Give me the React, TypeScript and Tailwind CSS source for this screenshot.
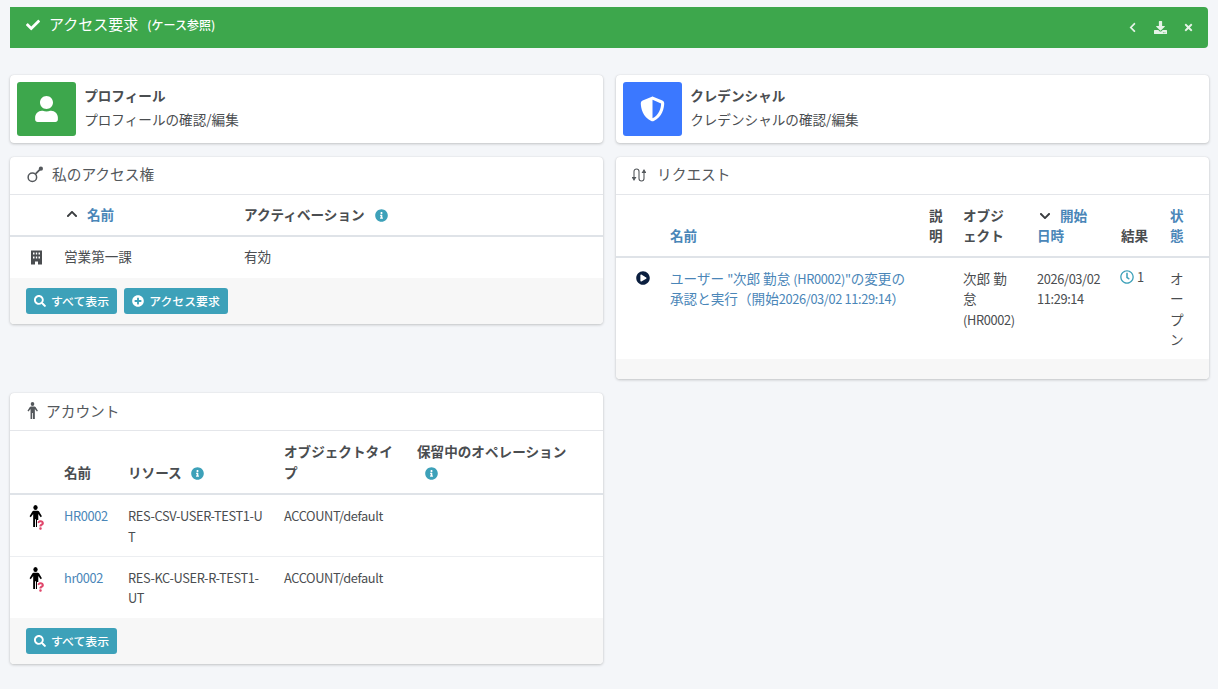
import React from 'react';
import {
  FaCheck,
  FaChevronLeft,
  FaDownload,
  FaTimes,
  FaUser,
  FaSearch,
  FaPlusCircle,
  FaInfoCircle,
  FaPlayCircle,
  FaRegClock,
  FaQuestion,
  FaChevronUp,
  FaChevronDown,
} from 'react-icons/fa';
import { FaShieldHalved } from 'react-icons/fa6';

// the latin part of the text is narrower than the font's own latin glyphs
const L = ({ children }: { children: React.ReactNode }) => <span className="text-[12.8px] leading-[16px] tracking-[-0.36px]">{children}</span>;

const Info = () => <FaInfoCircle className="inline-block w-[13px] h-[13px] text-[#3da1b9] align-[-2px]" />;

const ActionCard = ({ color, icon, title, desc }: { color: string; icon: React.ReactNode; title: string; desc: React.ReactNode }) => (
  <div className="h-[68px] bg-white rounded shadow-[0_0_1px_rgba(0,0,0,0.13),0_1px_3px_rgba(0,0,0,0.2)] flex items-center pl-[7px]">
    <div className={`w-[58.6px] h-[54px] rounded-[3px] flex items-center justify-center text-white ${color}`}>{icon}</div>
    <div className="ml-[8.6px] -mt-[3px] text-[13.6px] leading-[23.500px] text-[#4a4d50]">
      <div className="font-bold">{title}</div>
      <div>{desc}</div>
    </div>
  </div>
);

const Panel = ({ icon, title, children }: { icon: React.ReactNode; title: string; children: React.ReactNode }) => (
  <div className="bg-white rounded shadow-[0_0_1px_rgba(0,0,0,0.13),0_1px_3px_rgba(0,0,0,0.2)] overflow-hidden">
    <div className="h-[38px] flex items-center pl-[16px] pb-[2px] border-b border-[#e4e6ea] text-[14.7px] text-[#54585c]">
      {icon}
      <span>{title}</span>
    </div>
    {children}
  </div>
);

const Button = ({ icon, label }: { icon: React.ReactNode; label: string }) => (
  <button className="h-[26px] px-[8px] rounded-[3px] bg-[#3da1b9] text-white text-[11.9px] font-medium flex items-center gap-[5px]">
    {icon}
    {label}
  </button>
);

const AccessIcon = () => (
  <svg viewBox="0 0 16 16" className="w-[17px] h-[17px] mr-[9px] text-[#54585c]" fill="none" stroke="currentColor">
    <circle cx="6" cy="10.500" r="4" strokeWidth="1.400" />
    <path d="M9 7.500l4-4" strokeWidth="1.600" />
    <circle cx="14" cy="2.500" r="2" fill="currentColor" stroke="none" />
  </svg>
);

const RequestIcon = () => (
  <svg viewBox="0 0 14 14" className="w-[14px] h-[14px] mr-[11px] text-[#54585c]" fill="none" stroke="currentColor" strokeWidth="1.100">
    <path d="M2 11V3.500a2.500 2.500 0 0 1 5 0v7a2.500 2.500 0 0 0 5 0V3" />
    <path d="M.5 9.500L2 12l1.500-2.500zM10.500 4.500L12 2l1.500 2.500z" fill="currentColor" />
  </svg>
);

const PersonIcon = ({ className }: { className: string }) => (
  <svg viewBox="0 0 14 20" className={className} fill="currentColor" preserveAspectRatio="none">
    <circle cx="7" cy="2.300" r="2.300" />
    <path d="M4.500 5.300h5c.6 0 1 .2 1.400.7l3 4.200-1.300 1-2.600-3V20H7.500v-7h-1v7H4.500V8.200l-2.600 3-1.300-1 3-4.200c.4-.5.800-.7 1.400-.7z" />
  </svg>
);

const BuildingIcon = () => (
  <svg viewBox="0 0 11 14" className="ml-[11px] mt-[3px] w-[11px] h-[15px] text-[#4a4d50]" fill="currentColor">
    <path fillRule="evenodd" d="M0 0h11v14H7v-3H4v3H0zM2 2v2h1.500V2zm2.800 0v2h1.400V2zm2.700 0v2H9V2zM2 6v2h1.500V6zm2.800 0v2h1.400V6zm2.700 0v2H9V6z" />
  </svg>
);

const AccountIcon = () => (
  <div className="relative w-[16px] h-[24px] ml-[1px]">
    <PersonIcon className="w-[13px] h-[22px] text-black" />
    <FaQuestion className="absolute left-[8px] top-[15px] w-[7px] h-[10px] text-[#e0476b] bg-white" />
  </div>
);

const th = 'p-[10px] align-bottom text-left font-bold text-[13.6px] leading-[20.4px]';
const td = 'p-[10px] align-top text-[13.6px] leading-[20.4px]';

const App = () => {
  const font = { fontFamily: '"Noto Sans CJK JP", sans-serif' };
  return (
    <div style={font} className="w-[1218px] h-[689px] overflow-hidden bg-[#f4f6f9] pl-[10px] pr-[9px] pt-[7px] text-[#4a4d50]">
      {/* Page header */}
      <div className="h-[41px] mr-[1px] bg-[#3da74c] rounded-r-[4px] flex items-center text-white pb-[6px]">
        <FaCheck className="ml-[16px] w-[14px] h-[14px]" />
        <span className="ml-[9px] text-[15px]">アクセス要求</span>
        <span className="ml-[9px] text-[12px] font-medium">(ケース参照)</span>
        <div className="ml-auto flex items-center text-[#e6f3e8] pt-[6px]">
          <FaChevronLeft className="w-[9px] h-[11px]" />
          <FaDownload className="ml-[17px] w-[13px] h-[13px]" />
          <FaTimes className="ml-[16px] mr-[14px] w-[11px] h-[11px]" />
        </div>
      </div>

      <div className="mt-[27px] grid grid-cols-[593px_593px] gap-x-[13px] gap-y-[14px] items-start">
        <ActionCard color="bg-[#3da74c]" icon={<FaUser className="w-[23px] h-[26px]" />} title="プロフィール" desc="プロフィールの確認/編集" />
        <ActionCard color="bg-[#3b78ff]" icon={<FaShieldHalved className="w-[25px] h-[26px]" />} title="クレデンシャル" desc="クレデンシャルの確認/編集" />

        <Panel icon={<AccessIcon />} title="私のアクセス権">
          <table className="w-full table-fixed border-collapse">
            <thead>
              <tr className="border-b-2 border-[#dfe3e8]">
                <th className="w-[44px]" />
                <th className={`${th} w-[180px] !pt-[9px]`}>
                  <span className="inline-flex items-center text-[#4a86b8]">
                    <FaChevronUp className="ml-[2px] mr-[9px] w-[12px] h-[12px] text-[#3a3d40]" />
                    名前
                  </span>
                </th>
                <th className={`${th} !pt-[9px]`}>
                  アクティベーション <span className="ml-[7px]"><Info /></span>
                </th>
              </tr>
            </thead>
            <tbody>
              <tr>
                <td className={`${td} !pb-[12px]`}>
                  <BuildingIcon />
                </td>
                <td className={`${td} !pt-[9px] !pb-[12px]`}>営業第一課</td>
                <td className={`${td} !pt-[9px] !pb-[12px]`}>有効</td>
              </tr>
            </tbody>
          </table>
          <div className="h-[46px] bg-[#f7f7f7] flex items-center gap-[7px] pl-[16px]">
            <Button icon={<FaSearch className="w-[12px] h-[12px]" />} label="すべて表示" />
            <Button icon={<FaPlusCircle className="w-[12px] h-[12px]" />} label="アクセス要求" />
          </div>
        </Panel>

        <Panel icon={<RequestIcon />} title="リクエスト">
          <table className="w-full table-fixed border-collapse">
            <thead>
              <tr className="border-b-2 border-[#dfe3e8]">
                <th className="w-[44px]" />
                <th className={`${th} w-[259px] text-[#4a86b8]`}>名前</th>
                <th className={`${th} w-[34px]`}>説明</th>
                <th className={`${th} w-[74px]`}>オブジェクト</th>
                <th className={`${th} w-[84px] text-[#4a86b8]`}>
                  <FaChevronDown className="inline-block ml-[2px] mr-[9px] w-[12px] h-[12px] text-[#3a3d40] align-[-1px]" />
                  開始
                  <br />
                  日時
                </th>
                <th className={`${th} w-[49px]`}>結果</th>
                <th className={`${th} pr-[25px] text-[#4a86b8]`}>状態</th>
              </tr>
            </thead>
            <tbody>
              <tr>
                <td className={td}>
                  <FaPlayCircle className="ml-[10px] mt-[3px] w-[14px] h-[14px] text-[#0b1f3f]" />
                </td>
                <td className={`${td} text-[#4a86b8]`}>
                  ユーザー <L>"</L>次郎 勤怠 <L>(HR0002)"</L>の変更の
                  <br />
                  承認と実行（開始<L>2026/03/02 11:29:14</L>）
                </td>
                <td className={td} />
                <td className={td}>
                  次郎 勤怠 <L>(HR0002)</L>
                </td>
                <td className={td}>
                  <L>2026/03/02 11:29:14</L>
                </td>
                <td className={td}>
                  <span className="inline-flex items-center -ml-[1px]">
                    <FaRegClock className="w-[14px] h-[14px] mr-[3px] -mt-[1px] text-[#3da1b9]" />
                    <L>1</L>
                  </span>
                </td>
                <td className={`${td} pr-[25px]`}>オープン</td>
              </tr>
            </tbody>
          </table>
          <div className="h-[20px] bg-[#f7f7f7]" />
        </Panel>

        <Panel icon={<PersonIcon className="ml-[1px] w-[11px] h-[17px] mr-[8px]" />} title="アカウント">
          <table className="w-full table-fixed border-collapse">
            <thead>
              <tr className="border-b-2 border-[#dfe3e8]">
                <th className="w-[44px]" />
                <th className={`${th} w-[64px] !pb-[11px]`}>名前</th>
                <th className={`${th} w-[156px] !pb-[11px]`}>
                  リソース <span className="ml-[6px]"><Info /></span>
                </th>
                <th className={`${th} w-[133px] !pb-[11px]`}>オブジェクトタイプ</th>
                <th className={`${th} !pb-[11px]`}>
                  保留中のオペレーション
                  <br />
                  <span className="ml-[8px]"><Info /></span>
                </th>
              </tr>
            </thead>
            <tbody>
              {[
                { name: 'HR0002', res: ['RES-CSV-USER-TEST1-U', 'T'] },
                { name: 'hr0002', res: ['RES-KC-USER-R-TEST1-', 'UT'] },
              ].map((row, i) => (
                <tr key={row.name} className={i === 0 ? 'border-b border-[#eceef1]' : ''}>
                  <td className={`${td} pl-[18px]`}>
                    <AccountIcon />
                  </td>
                  <td className={`${td} text-[#4a86b8]`}>
                    <L>{row.name}</L>
                  </td>
                  <td className={`${td} whitespace-nowrap`}>
                    <L>{row.res[0]}</L>
                    <br />
                    <L>{row.res[1]}</L>
                  </td>
                  <td className={td}>
                    <L>ACCOUNT/default</L>
                  </td>
                  <td className={td} />
                </tr>
              ))}
            </tbody>
          </table>
          <div className="h-[46px] bg-[#f7f7f7] flex items-center pl-[16px]">
            <Button icon={<FaSearch className="w-[12px] h-[12px]" />} label="すべて表示" />
          </div>
        </Panel>
      </div>
    </div>
  );
};

export default App;
